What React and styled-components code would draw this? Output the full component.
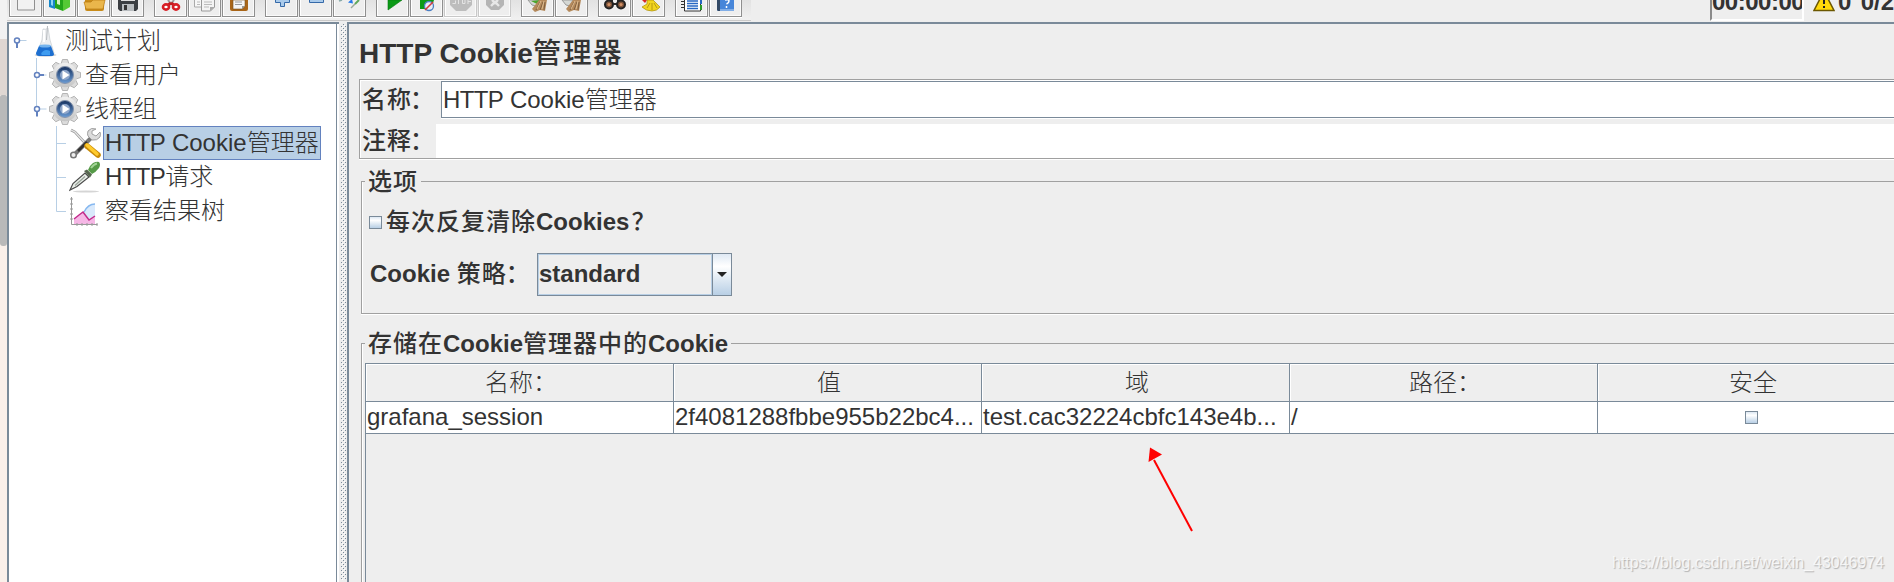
import React from 'react';
import styled, { createGlobalStyle, css } from 'styled-components';

const STEEL = '#7a8a99';
const ETCH = '#a0a0a0';
const FACE = '#eeeeee';
const GUIDE = '#b8cfe5';
const KNOB = '#6382bf';

const GlobalStyle = createGlobalStyle`
  * { box-sizing: border-box; }
  body {
    margin: 0;
    overflow: hidden;
    background: ${FACE};
    color: #333;
    font: 24px/34px "Liberation Sans", "Noto Sans CJK SC", sans-serif;
  }
`;

const Window = styled.div`
  display: flex;
  width: 1894px;
  height: 582px;
  overflow: hidden;
`;

const OuterScroll = styled.div`
  flex: 0 0 7px;
  display: flex;
  flex-direction: column;
  background: #faf0ea;
`;
const ScrollHead = styled.div`
  height: 39px;
  background: #f2f2f2;
`;
const ScrollTrack = styled.div`
  height: 56px;
  background: #e0d7d2;
`;
const ScrollThumb = styled.div`
  height: 151px;
  background: #b9b9b9;
  border-radius: 2px 2px 3px 3px;
`;

const Frame = styled.div`
  flex: 1;
  min-width: 0;
  display: flex;
  flex-direction: column;
`;

const TopBar = styled.div`
  flex: 0 0 22px;
  display: flex;
  justify-content: space-between;
  background: ${FACE};
`;
const ToolBar = styled.div`
  display: flex;
  gap: 10px;
  width: 744px;
  height: 21px;
  padding-left: 2px;
  background: linear-gradient(#e2e2e2, #f0f0f0 19px);
  border-bottom: 1px solid #cacaca;
`;
const ToolGroup = styled.div`
  display: flex;
  gap: 1px;
`;
const ToolButton = styled.div`
  width: 33px;
  height: 17px;
  background: ${FACE};
  border: 1px solid ${(p) => (p.$off ? '#c8c8c8' : '#8f8f8f')};
  border-top: 0;
  box-shadow: inset 1px 0 #fff, inset -1px -1px #fafafa, 0 1px #fff;
  svg { display: block; margin-left: -1px; }
`;

const Status = styled.div`
  display: flex;
  width: 184px;
  font-weight: bold;
  white-space: pre;
`;
const Timer = styled.div`
  width: 96px;
  height: 21px;
  overflow: hidden;
  border: solid;
  border-width: 0 2px 2px 2px;
  border-color: #fff #fff #fff #8a8a8a;
  letter-spacing: -0.5px;
`;
const StatusText = styled.div`
  margin-top: -15px;
  word-spacing: 2.5px;
`;
const Counts = styled.div`
  display: flex;
  padding-left: 9px;
  svg { margin-right: 3px; flex: none; }
`;

const Split = styled.div`
  flex: 1;
  min-height: 0;
  display: flex;
`;
const TreePane = styled.div`
  flex: 0 0 332px;
  background: #fff;
  border-top: 2px solid ${STEEL};
  border-left: 2px solid ${STEEL};
  display: flex;
`;
const TreeList = styled.div`
  width: 328px;
  border-right: 1px solid ${STEEL};
`;
const Divider = styled.div`
  flex: 0 0 8px;
  background: ${FACE};
`;
const TreeRow = styled.div`
  display: flex;
  height: 34px;
  white-space: nowrap;
  svg { flex: none; display: block; }
`;
const TreeLabel = styled.span`
  height: 34px;
  line-height: 32px;
  margin-left: ${(p) => p.$gap}px;
  padding: 0 1px;
  border: 1px solid transparent;
  ${(p) => p.$selected && css`
    background: ${GUIDE};
    border-color: ${KNOB};
  `}
`;
const Tight = styled.span`
  letter-spacing: -0.6px;
`;

const Editor = styled.div`
  flex: 1;
  min-width: 0;
  border-top: 2px solid ${STEEL};
  border-left: 2px solid ${STEEL};
  padding-left: 10px;
`;
const Title = styled.h1`
  margin: 0;
  height: 55px;
  padding-top: 10px;
  font-size: 28px;
  line-height: 40px;
`;
const Strong = styled.span`
  font-weight: bold;
  white-space: pre;
`;
/* Ideographs in bold labels are one pixel wider than their plain form. */
const Han = styled.span`
  font-family: "Noto Sans CJK SC", sans-serif;
  font-weight: ${(p) => (p.$plain ? 300 : 500)};
  letter-spacing: ${(p) => (p.$plain ? 0 : 1)}px;
  line-height: 1;
`;
const TitleHan = styled(Han)`
  font-size: 28.6px;
  letter-spacing: 1.6px;
`;
const Mark = styled.span`
  margin-left: ${(p) => p.$shift}px;
`;

const NamePanel = styled.div`
  height: 80px;
  border: 1px solid ${ETCH};
  border-right: 0;
  box-shadow: inset 1px 1px #fff, 0 1px #fff;
`;
const Field = styled.div`
  display: flex;
  height: ${(p) => p.$height}px;
  padding-left: 2px;
  & > :first-child { width: ${(p) => p.$label}px; }
`;
const NameInput = styled.div`
  flex: 1;
  height: 37px;
  margin-top: 1px;
  padding: 2px 0 0 1px;
  line-height: 32px;
  background: #fff;
  border: 1px solid ${STEEL};
  border-right: 0;
  box-shadow: 0 1px #fff;
`;
const CommentInput = styled.div`
  flex: 1;
  height: 34px;
  margin-top: 6px;
  background: #fff;
`;
const FieldLabel = styled(Strong)`
  line-height: ${(p) => p.$line}px;
`;

const Group = styled.fieldset`
  margin: ${(p) => p.$top}px 0 0 2px;
  padding: 0 0 0 ${(p) => p.$pad}px;
  height: ${(p) => p.$height}px;
  min-width: 0;
  border: 1px solid ${ETCH};
  border-right: 0;
  box-shadow: inset 1px 0 #fff, 0 1px #fff;
`;
const Legend = styled.legend`
  margin-left: ${(p) => p.$shift}px;
  height: 34px;
  padding: 0 3px;
  line-height: 36px;
  font-weight: bold;
  white-space: nowrap;
`;
const CheckLine = styled.div`
  display: flex;
  align-items: center;
  gap: 4px;
  height: 34px;
  margin-top: 7px;
`;
const CheckBox = styled.span`
  width: 13px;
  height: 13px;
  border: 1px solid ${STEEL};
  background: linear-gradient(#dde8f3, #fff 30%, #b8cfe5);
`;
const PolicyLine = styled.div`
  display: flex;
  align-items: center;
  height: 43px;
  margin-top: 14px;
  padding-left: 1px;
  & > :first-child {
    width: 167px;
    line-height: 32px;
    padding-bottom: 1px;
  }
`;
const Combo = styled.div`
  display: flex;
  width: 195px;
  height: 43px;
  border: 1px solid ${STEEL};
  font-weight: bold;
`;
const ComboValue = styled.div`
  flex: 1;
  line-height: 38px;
  border: 1px solid ${GUIDE};
`;
const ComboArrow = styled.div`
  width: 19px;
  display: flex;
  align-items: center;
  justify-content: center;
  border-left: 1px solid ${STEEL};
  background: linear-gradient(#dfe9f4, #fff 30%, #b8cfe5);
`;

const Table = styled.div`
  display: grid;
  grid-template-columns: repeat(5, 308px);
  height: 240px;
  margin-top: 3px;
  grid-template-rows: 38px 32px;
  border-top: 1px solid ${STEEL};
  border-left: 1px solid ${STEEL};
  overflow: hidden;
`;
const HeadCell = styled.div`
  padding-left: 3px;
  text-align: center;
  line-height: 37px;
  border-right: 1px solid ${STEEL};
  border-bottom: 1px solid ${STEEL};
  box-shadow: inset 1px 1px #fff;
`;
const Cell = styled.div`
  display: flex;
  align-items: center;
  justify-content: ${(p) => (p.$center ? 'center' : 'flex-start')};
  padding: ${(p) => (p.$center ? '0 1px 0 0' : '0 0 1px 1px')};
  line-height: 30px;
  background: #fff;
  border-right: 1px solid ${STEEL};
  border-bottom: 1px solid ${STEEL};
`;

const Arrow = styled.svg`
  position: absolute;
  left: 1140px;
  top: 440px;
`;
const Watermark = styled.div`
  position: absolute;
  left: 1612px;
  top: 553px;
  font-size: 16px;
  line-height: 20px;
  color: rgba(255, 255, 255, 0.75);
  text-shadow: 1px 1px 1px rgba(0, 0, 0, 0.25);
`;

const Broom = ({ green }) => (
  <>
    <path d="M7 0h11l-3 6-4-1z" fill="#d5d8d5" stroke="#999" />
    {green && <path d="M10 1l9-1-3 4z" fill="#4aa52c" />}
    <path d="M18 0h8l-2 11-5-1-5 2-3-3z" fill="#b58a5c" />
    <path d="M19 2l-4 8M22 2l-3 8M24 2l-1 8" stroke="#806040" />
    <path d="M20 1l-4 8M23 1l-2 8" stroke="#dfbd91" />
  </>
);

const icons = {
  fresh: <path d="M8.500-1v11h17v-11" fill="#f2f2f2" stroke="#909090" />,
  templates: (
    <>
      <path d="M6 0h6v9l-6-2z" fill="#1687c9" />
      <path d="M8 0h2v6l-2-1z" fill="#8bd4f4" />
      <path d="M12 0h8v11l-8-3z" fill="#23a51a" />
      <path d="M20 0h7v7l-7 4z" fill="#55c935" />
      <path d="M14 0h3v5l-3-1z" fill="#d2f5c4" />
    </>
  ),
  open: (
    <>
      <path d="M8 0h19v9q0 2-2 2h-15q-2 0-2-2z" fill="#c98c19" />
      <path d="M7 2h7l2-2h12l-2 9h-17z" fill="#eab64b" stroke="#b77a12" strokeWidth=".7" />
    </>
  ),
  save: (
    <>
      <path d="M7 0h20v9l-2 2h-16l-2-2z" fill="#3b3e42" />
      <path d="M10 0h14v1h-14z" fill="#ddd" />
      <path d="M11 4h12v7h-12z" fill="#b9bdc0" />
      <path d="M13 5h3v5h-3z" fill="#333" />
    </>
  ),
  cut: (
    <>
      <path d="M14 0l3 4 3-4" fill="none" stroke="#999" strokeWidth="2" />
      <path d="M17 3l-3 2M17 3l3 2" stroke="#c41c20" strokeWidth="3" />
      <ellipse cx="12" cy="7" rx="3" ry="2.600" fill="#fff" stroke="#d71f25" strokeWidth="2.600" />
      <ellipse cx="22" cy="7" rx="3" ry="2.600" fill="#fff" stroke="#d71f25" strokeWidth="2.600" />
    </>
  ),
  copy: (
    <>
      <path d="M6.500-1v8h12v-8" fill="#f7f7f7" stroke="#aaa" />
      <path d="M13.500-1v12h9l4-4v-8" fill="#f4f4f4" stroke="#999" />
      <path d="M16 2h8M16 4.500h8M16 7h5M9 2h3M9 4.500h3" stroke="#bbb" />
      <path d="M22 11v-4h5z" fill="#aaa" />
    </>
  ),
  paste: (
    <>
      <path d="M8 0h18v9q0 2-2 2h-14q-2 0-2-2z" fill="#a96518" />
      <path d="M11 0h12v6l-3 3h-9z" fill="#f5f5f5" stroke="#77501f" strokeWidth=".6" />
      <path d="M13 2h7M13 4.500h7" stroke="#999" />
      <path d="M20 9v-3h3z" fill="#999" />
    </>
  ),
  expand: <path d="M10.500-1v3.500h5v4h4v-4h5v-3.500" fill="#a9caeb" stroke="#3569a8" />,
  collapse: <path d="M10.500-1v3.500h14v-3.500" fill="#a9caeb" stroke="#3569a8" />,
  toggle: (
    <>
      <path d="M6 1l3-1" stroke="#8aa" strokeWidth="1.500" />
      <path d="M20 3.500l-5-1 4-3.500z" fill="#2478ea" />
      <path d="M18 8l4-4" stroke="#9aa89a" strokeWidth="1.500" />
      <path d="M22 4l4-4" stroke="#5fa85c" strokeWidth="2" />
    </>
  ),
  start: <path d="M12 0h14l-14 10z" fill="#0b9a16" stroke="#087b10" strokeWidth=".6" />,
  startNow: (
    <>
      <path d="M10 0h14l-3 9h-11z" fill="#0b9a16" />
      <circle cx="19" cy="6" r="4.500" fill="#e8edf6" stroke="#4b7fc2" strokeWidth="1.300" />
      <path d="M15 10l8-8" stroke="#d33b3b" strokeWidth="1.600" />
    </>
  ),
  stop: (
    <>
      <path d="M6 0h22v5l-6 6h-10l-6-6z" fill="#bdbdbd" />
      <path d="M8.500 3.500h3v-3M14.500 0v4M18.500 0v3.500h2.500v-3.500M24 0v4M24 1.500h3" stroke="#e4e4e4" fill="none" />
    </>
  ),
  shutdown: (
    <>
      <path d="M8 0h18v5l-5 5h-8l-5-5z" fill="#b5b5b5" />
      <path d="M13 6l4-4 4 4M14 0l3 3 3-3" stroke="#e7e7e7" strokeWidth="2.400" fill="none" />
    </>
  ),
  clear: <Broom green />,
  clearAll: <Broom />,
  search: (
    <>
      <path d="M10 0h5v3h4v-3h5l4 5h-22z" fill="#2b2b2b" />
      <circle cx="11" cy="4.500" r="4" fill="#7c5239" stroke="#222" strokeWidth="2" />
      <circle cx="23" cy="4.500" r="4" fill="#7c5239" stroke="#222" strokeWidth="2" />
      <circle cx="11" cy="4.500" r="1.600" fill="#d19065" />
      <circle cx="23" cy="4.500" r="1.600" fill="#d19065" />
    </>
  ),
  reset: (
    <>
      <path d="M10 0h5l-2 3z" fill="#d92525" />
      <path d="M15 0h6l7 7q-3 4-8 4-6 0-10-4l5-3z" fill="#f2d51e" stroke="#a98c0c" strokeWidth=".7" />
      <path d="M18 3l-3 5M20 3l0 7M22 3l3 5" stroke="#b79a13" fill="none" />
    </>
  ),
  functions: (
    <>
      <path d="M9.500-1v12h16v-12" fill="#fff" stroke="#333" />
      <path d="M12 1h11M12 3.500h11M12 6h11M12 8.500h11" stroke="#2767c4" strokeWidth="1.300" />
      <path d="M6 1.500h4M6 4.500h4M6 7.500h4" stroke="#333" />
      <path d="M25 0h2v4h-2z" fill="#2667c0" />
      <path d="M25 5h2v5h-2z" fill="#2b9b29" />
    </>
  ),
  help: (
    <>
      <path d="M8 0h17v11h-16l-1-1z" fill="#4786d9" />
      <path d="M8 0h3v11h-2l-1-1z" fill="#334a66" />
      <path d="M11 10h14" stroke="#bcd6f5" />
      <path d="M16 0q4-1 4 1t-2.500 3M17.500 6v2" stroke="#fff" strokeWidth="1.500" fill="none" />
    </>
  ),
};

const toolGroups = [
  ['fresh', 'templates', 'open', 'save'],
  ['cut', 'copy', 'paste'],
  ['expand', 'collapse', 'toggle'],
  ['start', 'startNow', 'stop', 'shutdown'],
  ['clear', 'clearAll'],
  ['search', 'reset'],
  ['functions', 'help'],
];

const Knob = ({ x, y = 17, open }) => (
  <>
    <path d={`M${x} ${y - 0.5}h9.500`} stroke={GUIDE} />
    <path d={open ? `M${x} ${y}v7` : `M${x} ${y - 0.5}h7`} stroke={KNOB} strokeWidth="2" />
    <circle cx={x} cy={y - 0.5} r="2.500" fill="#fff" stroke={KNOB} strokeWidth="1.500" />
  </>
);

const Flask = () => (
  <svg width="24" height="34" viewBox="0 0 24 34">
    <ellipse cx="11.500" cy="31" rx="11" ry="1.500" fill="#ccc" />
    <path d="M9 5q3 1 5-1l2 12 4 13q0 3-3 3h-12q-3 0-2-3l5-13z" fill="#eceef0" stroke="#cbd0d4" strokeWidth=".8" />
    <path d="M5 22h12l3 8q0 2-3 2h-12q-3 0-3-3z" fill="#1d6fd0" />
    <ellipse cx="11" cy="22" rx="6" ry="1.600" fill="#75b4ee" />
    <path d="M7 30q3-6 9-3v4h-8z" fill="#3f9cf0" />
    <path d="M13.500 2l-1 14" stroke="#b5b9bd" />
    <path d="M10 6v12" stroke="#fff" strokeWidth="2" />
  </svg>
);

const Gear = () => (
  <svg width="32" height="34" viewBox="0 0 32 34">
    <defs>
      <linearGradient id="gearFace" x2="0" y2="1">
        <stop stopColor="#f0f0f0" />
        <stop offset="1" stopColor="#c4c4c4" />
      </linearGradient>
      <linearGradient id="gearHub" x2="0" y2="1">
        <stop stopColor="#16315f" />
        <stop offset="1" stopColor="#6b9cd5" />
      </linearGradient>
    </defs>
    <g fill="#dcdcdc" stroke="#a6a6a6" strokeWidth=".8">
      {[0, 45, 90, 135].map((a) => (
        <path key={a} d="M12 6l1.500-4.500h5l1.500 4.500v22l-1.500 4.500h-5l-1.500-4.500z" transform={`rotate(${a} 16 17)`} />
      ))}
    </g>
    <circle cx="16" cy="17" r="12.200" fill="url(#gearFace)" />
    <circle cx="16" cy="17" r="8.500" fill="url(#gearHub)" stroke="#8695ad" strokeWidth="1" />
    <circle cx="16" cy="17" r="5" fill="#8fa6ca" />
    <path d="M13.500 12.500v9l7-4.500z" fill="#fff" />
  </svg>
);

const Tools = () => (
  <svg width="32" height="34" viewBox="0 0 32 34">
    <path d="M2 4l4 2 11 12" fill="none" stroke="#999" strokeWidth="2.600" />
    <path d="M2 4l4 2 11 12" fill="none" stroke="#e6e6e6" strokeWidth="1.200" />
    <path d="M5 29l18-18" stroke="#777" strokeWidth="4" />
    <path d="M9 25l9-9" stroke="#333" strokeWidth="2.500" />
    <path d="M18 20l11 9" stroke="#c88a08" strokeWidth="5.500" strokeLinecap="round" />
    <path d="M18 19l10 9" stroke="#ffcb2d" strokeWidth="3.500" strokeLinecap="round" />
    <circle cx="4.500" cy="29" r="2.800" fill="#eee" stroke="#777" strokeWidth="1.500" />
    <path d="M27 3q-5-2-8 2-1 3 0 5l4 4q5 1 8-3 1-3 0-5l-4 4-4-2 0-3z" fill="#dcdcdc" stroke="#999" strokeWidth=".9" />
  </svg>
);

const Dropper = () => (
  <svg width="32" height="34" viewBox="0 0 32 34">
    <ellipse cx="17" cy="31.500" rx="13" ry=".9" fill="#d5d5d5" />
    <path d="M1 30l3-6.500 12-10.500 4 4-12 9.500z" fill="#e9efe9" stroke="#4c4c4c" strokeWidth="1.200" />
    <path d="M6 25.500l10-9" stroke="#9aa39a" strokeWidth="1.300" />
    <path d="M15 11l3-1.500 5 5-2 3z" fill="#56664f" />
    <path d="M19 10q1-4 5-7 4-2 6-1 2 2 0 6-3 4-7 6z" fill="#559a47" />
    <path d="M22 8q3-4 6-4.500" fill="none" stroke="#a2d596" strokeWidth="2" />
  </svg>
);

const Chart = () => (
  <svg width="32" height="34" viewBox="0 0 32 34">
    <path d="M14 18l5-5q3-3 7-3v14l-6 2z" fill="#d9e9fb" />
    <path d="M15 18q4-8 11-8" fill="none" stroke="#86b8f0" strokeWidth="1.400" />
    <path d="M5 25l9-7 6 8 6-4v8H5z" fill="#f6b7e6" />
    <path d="M5 25l5-4 4-3 6 8 6-4" fill="none" stroke="#c22b8b" strokeWidth="1.500" />
    <path d="M2.500 3v27.500h26M1 5h3M1 10h3M1 15h3M1 20h3M1 25h3M8 29v3M13 29v3M18 29v3M23 29v3M28 29v3" fill="none" stroke="#999" />
  </svg>
);

const Branch = ({ last }) => (
  <svg width="60" height="34">
    <path d={`M47.500 0v${last ? 17.5 : 34}M47.500 17.500h9.500`} stroke={GUIDE} fill="none" />
  </svg>
);

const DividerDots = () => (
  <svg width="8" height="558">
    <defs>
      <pattern id="grip" width="4" height="4" patternUnits="userSpaceOnUse">
        <path d="M2 0h1v1h-1zM0 2h1v1h-1z" fill={STEEL} />
        <path d="M3 1h1v1h-1zM1 3h1v1h-1z" fill="#fff" />
      </pattern>
    </defs>
    <rect x="2" y="2" width="5" height="556" fill="url(#grip)" />
  </svg>
);

const headers = ['名称：', '值', '域', '路径：', '安全'];
const values = ['grafana_session', '2f4081288fbbe955b22bc4...', 'test.cac32224cbfc143e4b...', '/'];

export default function App() {
  return (
    <Window>
      <GlobalStyle />
      <OuterScroll>
        <ScrollHead />
        <ScrollTrack />
        <ScrollThumb />
      </OuterScroll>
      <Frame>
        <TopBar>
          <ToolBar>
            {toolGroups.map((group) => (
              <ToolGroup key={group[0]}>
                {group.map((name) => (
                  <ToolButton key={name} $off={name === 'stop' || name === 'shutdown'}>
                    <svg width="33" height="15">{icons[name]}</svg>
                  </ToolButton>
                ))}
              </ToolGroup>
            ))}
          </ToolBar>
          <Status>
            <Timer>
              <StatusText>00:00:00</StatusText>
            </Timer>
            <Counts>
              <svg width="22" height="12">
                <path d="M11-9L21 10.500H1z" fill="#ffd80a" stroke="#6b5700" strokeWidth="1.500" />
                <path d="M11 0v4M11 6v2" stroke="#222" strokeWidth="2" />
              </svg>
              <StatusText>0 0/2</StatusText>
            </Counts>
          </Status>
        </TopBar>
        <Split>
          <TreePane>
            <TreeList>
              <TreeRow>
                <svg width="25" height="34"><Knob x={8} open /></svg>
                <Flask />
                <TreeLabel $gap={5}><Han $plain>测试计划</Han></TreeLabel>
              </TreeRow>
              <TreeRow>
                <svg width="40" height="34">
                  <path d="M27.500 0v34" stroke={GUIDE} />
                  <Knob x={28} y={17.5} />
                </svg>
                <Gear />
                <TreeLabel $gap={2}><Han $plain>查看用户</Han></TreeLabel>
              </TreeRow>
              <TreeRow>
                <svg width="40" height="34">
                  <path d="M27.500 0v16" stroke={GUIDE} />
                  <Knob x={28} y={17.5} open />
                </svg>
                <Gear />
                <TreeLabel $gap={2}><Han $plain>线程组</Han></TreeLabel>
              </TreeRow>
              <TreeRow>
                <Branch />
                <Tools />
                <TreeLabel $gap={2} $selected>
                  <Tight>HTTP</Tight> Cookie<Han $plain>管理器</Han>
                </TreeLabel>
              </TreeRow>
              <TreeRow>
                <Branch />
                <Dropper />
                <TreeLabel $gap={2}><Tight>HTTP</Tight><Han $plain>请求</Han></TreeLabel>
              </TreeRow>
              <TreeRow>
                <Branch last />
                <Chart />
                <TreeLabel $gap={2}><Han $plain>察看结果树</Han></TreeLabel>
              </TreeRow>
            </TreeList>
          </TreePane>
          <Divider><DividerDots /></Divider>
          <Editor>
            <Title>HTTP Cookie<TitleHan>管理器</TitleHan></Title>
            <NamePanel>
              <Field $height={38} $label={79}>
                <FieldLabel $line={39}><Han>名称<Mark $shift={-2}>：</Mark></Han></FieldLabel>
                <NameInput><Tight>HTTP</Tight> Cookie<Han $plain>管理器</Han></NameInput>
              </Field>
              <Field $height={40} $label={74}>
                <FieldLabel $line={46}><Han>注释<Mark $shift={-2}>：</Mark></Han></FieldLabel>
                <CommentInput />
              </Field>
            </NamePanel>
            <Group $top={5} $height={150} $pad={7}>
              <Legend $shift={-4}><Han>选项</Han></Legend>
              <CheckLine>
                <CheckBox />
                <Strong><Han>每次反复清除</Han>Cookies<Han><Mark $shift={2}>？</Mark></Han></Strong>
              </CheckLine>
              <PolicyLine>
                <Strong>Cookie <Han>策略<Mark $shift={-1}>：</Mark></Han></Strong>
                <Combo>
                  <ComboValue>standard</ComboValue>
                  <ComboArrow>
                    <svg width="10" height="5"><path d="M0 0h10l-5 5z" fill="#222" /></svg>
                  </ComboArrow>
                </Combo>
              </PolicyLine>
            </Group>
            <Group $top={12} $height={290} $pad={3}>
              <Legend $shift={0}><Han>存储在</Han>Cookie<Han>管理器中的</Han>Cookie</Legend>
              <Table>
                {headers.map((h) => <HeadCell key={h}><Han $plain>{h}</Han></HeadCell>)}
                {values.map((v) => <Cell key={v}>{v}</Cell>)}
                <Cell $center><CheckBox /></Cell>
              </Table>
            </Group>
          </Editor>
        </Split>
      </Frame>
      <Arrow width="60" height="100">
        <path d="M14 20L52 91" stroke="#f00" strokeWidth="2" />
        <path d="M10 7.500L22 14.500L8.500 22z" fill="#f00" />
      </Arrow>
      <Watermark>https://blog.csdn.net/weixin_43046974</Watermark>
    </Window>
  );
}
